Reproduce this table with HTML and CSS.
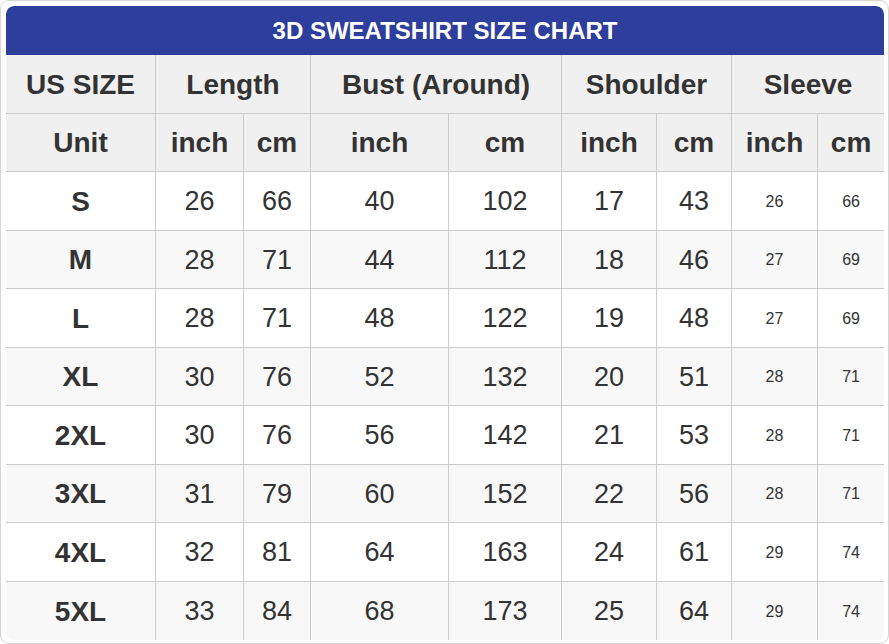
FILE: index.html
```html
<!DOCTYPE html>
<html>
<head>
<meta charset="utf-8">
<link rel="stylesheet" href="styles.css">
</head>
<body>
<div class="frame">
<table class="chart">
<colgroup>
<col class="c1"><col class="c2"><col class="c3"><col class="c4"><col class="c5"><col class="c6"><col class="c7"><col class="c8"><col class="c9">
</colgroup>
<thead>
<tr class="title"><th colspan="9">3D SWEATSHIRT SIZE CHART</th></tr>
<tr class="head"><th>US SIZE</th><th colspan="2">Length</th><th colspan="2">Bust (Around)</th><th colspan="2">Shoulder</th><th colspan="2" class="last">Sleeve</th></tr>
<tr class="head"><th>Unit</th><th>inch</th><th>cm</th><th>inch</th><th>cm</th><th>inch</th><th>cm</th><th>inch</th><th class="last">cm</th></tr>
</thead>
<tbody>
<tr><th>S</th><td>26</td><td>66</td><td>40</td><td>102</td><td>17</td><td>43</td><td class="sm">26</td><td class="sm last">66</td></tr>
<tr><th>M</th><td>28</td><td>71</td><td>44</td><td>112</td><td>18</td><td>46</td><td class="sm">27</td><td class="sm last">69</td></tr>
<tr><th>L</th><td>28</td><td>71</td><td>48</td><td>122</td><td>19</td><td>48</td><td class="sm">27</td><td class="sm last">69</td></tr>
<tr><th>XL</th><td>30</td><td>76</td><td>52</td><td>132</td><td>20</td><td>51</td><td class="sm">28</td><td class="sm last">71</td></tr>
<tr><th>2XL</th><td>30</td><td>76</td><td>56</td><td>142</td><td>21</td><td>53</td><td class="sm">28</td><td class="sm last">71</td></tr>
<tr><th>3XL</th><td>31</td><td>79</td><td>60</td><td>152</td><td>22</td><td>56</td><td class="sm">28</td><td class="sm last">71</td></tr>
<tr><th>4XL</th><td>32</td><td>81</td><td>64</td><td>163</td><td>24</td><td>61</td><td class="sm">29</td><td class="sm last">74</td></tr>
<tr><th>5XL</th><td>33</td><td>84</td><td>68</td><td>173</td><td>25</td><td>64</td><td class="sm">29</td><td class="sm last">74</td></tr>
</tbody>
</table>
</div>
</body>
</html>
```
FILE: styles.css
```css
html, body {
  margin: 0;
  padding: 0;
  background: #ffffff;
}
body {
  font-family: "Liberation Sans", Arial, sans-serif;
  color: #333333;
}
.frame {
  box-sizing: border-box;
  width: 889px;
  height: 644px;
  border: 1px solid #d6d6d6;
  border-radius: 9px;
  padding: 5px 4px 3px 5px;
}
.chart {
  width: 878px;
  table-layout: fixed;
  border-collapse: separate;
  border-spacing: 0;
  border-radius: 8px;
  overflow: hidden;
}
.c1 { width: 150px; }
.c2 { width: 88px; }
.c3 { width: 67px; }
.c4 { width: 138px; }
.c5 { width: 113px; }
.c6 { width: 95px; }
.c7 { width: 75px; }
.c8 { width: 86px; }
.c9 { width: 66px; }
.chart th, .chart td {
  padding: 2px 0 0 0;
  text-align: center;
  vertical-align: middle;
  border-right: 1px solid #cccccc;
  border-bottom: 1px solid #cccccc;
  box-sizing: border-box;
}
.chart .last { border-right: none; }
.title th {
  height: 49px;
  padding: 0;
  background: #2e3e9c;
  color: #ffffff;
  font-size: 24px;
  font-weight: bold;
  border: none;
  border-radius: 8px 8px 0 0;
}
.head th {
  height: 58.5px;
  background: #f0f0f0;
  font-size: 28px;
  font-weight: bold;
  color: #333333;
}
tbody th, tbody td {
  height: 58.5px;
  font-size: 27px;
}
tbody th { font-weight: bold; font-size: 28px; }
tbody td { font-weight: normal; }
tbody tr:nth-child(odd) { background: #ffffff; }
tbody tr:nth-child(even) { background: #f8f8f8; }
tbody tr:last-child th, tbody tr:last-child td { border-bottom: none; }
.chart td.sm { font-size: 16px; }
```
